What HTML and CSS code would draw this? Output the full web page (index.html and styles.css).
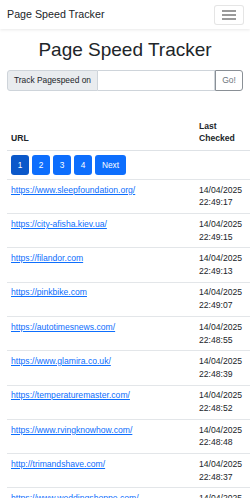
FILE: index.html
```html
<!DOCTYPE html>
<html lang="en">
<head>
<meta charset="utf-8">
<title>Page Speed Tracker</title>
<link rel="stylesheet" href="styles.css">
</head>
<body>
<nav class="navbar">
  <span class="brand">Page Speed Tracker</span>
  <button class="toggler" aria-label="Toggle navigation">
    <svg width="14" height="10" viewBox="0 0 14 10"><path d="M0 1h14M0 5h14M0 9h14" stroke="#7a7a7a" stroke-width="1.3"/></svg>
  </button>
</nav>
<h1 class="title">Page Speed Tracker</h1>
<form class="input-group">
  <span class="addon">Track Pagespeed on</span>
  <input class="field" type="text">
  <button class="go" type="button">Go!</button>
</form>
<table class="table">
  <colgroup><col class="col-url"><col class="col-date"></colgroup>
  <thead>
    <tr><th>URL</th><th>Last Checked</th></tr>
  </thead>
  <tbody>
    <tr class="pager-row"><td colspan="2">
      <div class="pager">
        <a class="pbtn active">1</a><a class="pbtn">2</a><a class="pbtn">3</a><a class="pbtn">4</a><a class="pbtn next">Next</a>
      </div>
    </td></tr>
    <tr><td><a class="link" href="#">https://www.sleepfoundation.org/</a></td><td>14/04/2025 22:49:17</td></tr>
    <tr><td><a class="link" href="#">https://city-afisha.kiev.ua/</a></td><td>14/04/2025 22:49:15</td></tr>
    <tr><td><a class="link" href="#">https://filandor.com</a></td><td>14/04/2025 22:49:13</td></tr>
    <tr><td><a class="link" href="#">https://pinkbike.com</a></td><td>14/04/2025 22:49:07</td></tr>
    <tr><td><a class="link" href="#">https://autotimesnews.com/</a></td><td>14/04/2025 22:48:55</td></tr>
    <tr><td><a class="link" href="#">https://www.glamira.co.uk/</a></td><td>14/04/2025 22:48:39</td></tr>
    <tr><td><a class="link" href="#">https://temperaturemaster.com/</a></td><td>14/04/2025 22:48:52</td></tr>
    <tr><td><a class="link" href="#">https://www.rvingknowhow.com/</a></td><td>14/04/2025 22:48:48</td></tr>
    <tr><td><a class="link" href="#">http://trimandshave.com/</a></td><td>14/04/2025 22:48:37</td></tr>
    <tr><td><a class="link" href="#">https://www.weddingshoppe.com/</a></td><td>14/04/2025 22:48:31</td></tr>
  </tbody>
</table>
</body>
</html>
```
FILE: styles.css
```css
* { box-sizing: border-box; }
body {
  margin: 0;
  font-family: "Liberation Sans", Arial, sans-serif;
  font-size: 8.6px;
  line-height: 1.5;
  color: #212529;
  background: #fff;
}
.navbar {
  height: 29px;
  padding: 0 6px 0 7px;
  display: flex;
  align-items: center;
  justify-content: space-between;
  box-shadow: 0 1px 3px rgba(0,0,0,0.09);
}
.brand {
  font-size: 10.7px;
  color: #212529;
}
.toggler {
  width: 30px;
  height: 20px;
  margin-top: 1px;
  padding: 0;
  border: 1px solid rgba(0,0,0,0.1);
  border-radius: 3px;
  background: #fff;
  display: flex;
  align-items: center;
  justify-content: center;
}
.title {
  margin: 10px 0 8px;
  font-size: 19px;
  font-weight: 500;
  line-height: 1.2;
  text-align: center;
}
.input-group {
  margin: 0 7px;
  height: 21px;
  display: flex;
}
.addon {
  flex: none;
  width: 91px;
  padding: 0 4px 0 6px;
  display: flex;
  align-items: center;
  white-space: nowrap;
  background: #e9ecef;
  border: 1px solid #ced4da;
  border-radius: 3px 0 0 3px;
  font-size: 8.4px;
  color: #212529;
}
.field {
  flex: 1;
  min-width: 0;
  border: 1px solid #ced4da;
  border-left: 0;
  margin: 0;
  padding: 0 5px;
}
.go {
  width: 28px;
  margin: 0;
  padding: 0;
  border: 1px solid #8a9096;
  border-radius: 0 3px 3px 0;
  background: #fff;
  color: #6c757d;
  font-family: inherit;
  font-size: 8.5px;
}
.table {
  margin: 25px 0 0 7px;
  width: 243px;
  table-layout: fixed;
  border-collapse: collapse;
}
.col-url { width: 188px; }
.col-date { width: 55px; }
.table th {
  text-align: left;
  vertical-align: bottom;
  font-weight: bold;
  padding: 3.75px 4px 4.5px;
  border-bottom: 1px solid #dee2e6;
}
.table td {
  vertical-align: top;
  padding: 3.75px 4px;
  border-bottom: 1px solid #e3e6e9;
}
.pager-row td {
  padding: 4px 4px 4px;
}
.pager {
  display: flex;
  gap: 3px;
}
.pbtn {
  width: 18px;
  height: 20px;
  display: flex;
  align-items: center;
  justify-content: center;
  background: #0d6efd;
  color: #fff;
  border-radius: 3px;
  font-size: 8.3px;
}
.pbtn.active { background: #0a58ca; }
.pbtn.next { width: 31px; }
.link {
  color: #0d6efd;
  text-decoration: underline;
  white-space: nowrap;
}
```
